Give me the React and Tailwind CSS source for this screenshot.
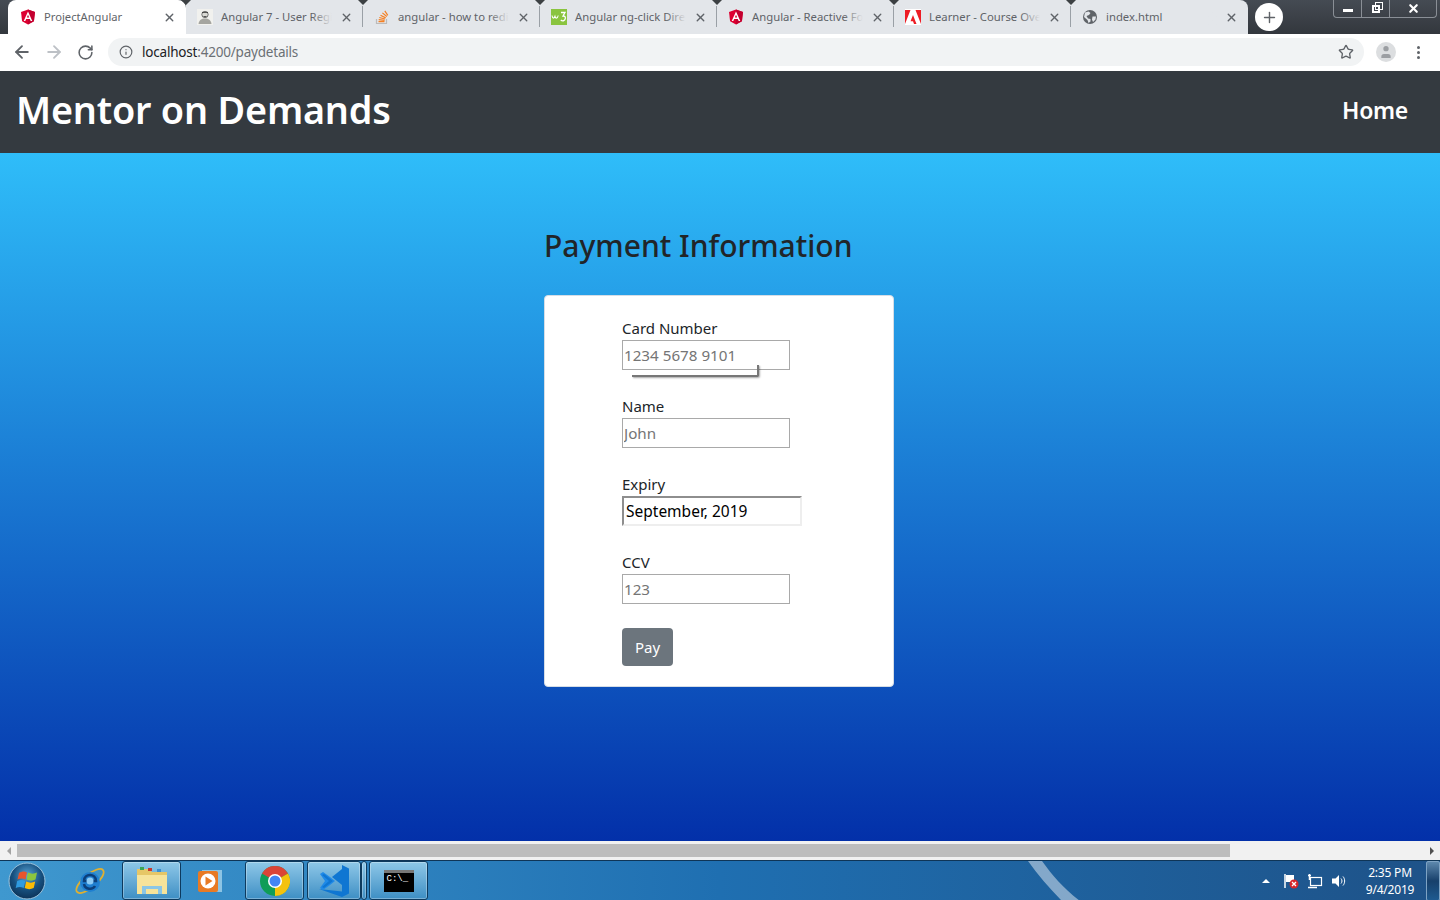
import { X, ArrowLeft, ArrowRight, RotateCw, Info, Star, Plus, User } from 'lucide-react';

const uiFont = 'font-["Noto_Sans",sans-serif]';

function AngularIcon() {
  return (
    <svg viewBox="0 0 16 16" className="w-4 h-4 shrink-0">
      <path d="M8 .5 1 3l1.100 9.200L8 15.500l5.900-3.300L15 3z" fill="#dd0031" />
      <path d="M8 .5V15.500l5.900-3.300L15 3z" fill="#c3002f" />
      <path d="M8 2.600 3.700 12h1.600l.9-2.100h3.600l.9 2.100h1.600zm1.200 6H6.800L8 5.700z" fill="#fff" />
    </svg>
  );
}

function PersonIcon() {
  return (
    <svg viewBox="0 0 16 16" className="w-4 h-4 shrink-0">
      <rect width="16" height="16" fill="#f1f1ee" />
      <circle cx="8" cy="5.500" r="3.200" fill="#d9d9d4" stroke="#555" strokeWidth="0.800" />
      <path d="M1.500 15c.5-4 3-5.500 6.500-5.500s6 1.500 6.500 5.500z" fill="#a5a5a0" />
      <path d="M5 3.500h6M6.500 7.500h3" stroke="#333" strokeWidth="0.800" />
    </svg>
  );
}

function StackIcon() {
  return (
    <svg viewBox="0 0 16 16" className="w-4 h-4 shrink-0" fill="none">
      <path d="M2.500 10v4.500h10V10" stroke="#bcbbbb" strokeWidth="1.200" />
      <path d="M4.500 12.700h6M4.700 10.700l5.900.6M5.300 8.500l5.700 1.500M6.500 6.200l5.200 2.700M8.400 3.900l4.400 3.600M10.800 1.800l3 4.500" stroke="#f48024" strokeWidth="1.200" />
    </svg>
  );
}

function W3Icon() {
  return (
    <svg viewBox="0 0 16 16" className="w-4 h-4 shrink-0" fill="none">
      <rect width="16" height="16" fill="#8ac43f" />
      <path d="M1 6.500c.5 3 2 3.500 3 .8.800 2.700 2.500 2.200 3.200-.8" stroke="#fff" strokeWidth="1.100" />
      <path d="M10 3.500h4l-2 3.500c2 0 2.500 1 2.300 2.500-.3 2.500-3 3-4.500 1.500" stroke="#fff" strokeWidth="1.300" />
    </svg>
  );
}

function AdobeIcon() {
  return (
    <svg viewBox="0 0 16 16" className="w-4 h-4 shrink-0">
      <rect width="16" height="16" fill="#fff" />
      <path d="M0 1h5.500L0 15zM16 1h-5.500L16 15zM8 6l3.500 9H9l-1-2.700H5.500z" fill="#ed1c24" />
    </svg>
  );
}

function GlobeIcon() {
  return (
    <svg viewBox="0 0 16 16" className="w-4 h-4 shrink-0">
      <circle cx="8" cy="8" r="7" fill="#5f6368" />
      <path d="M3 3.500 6.500 2.500l2 1.500-1.500 2-2.500 1 1.500 2.500 2.500.5v2.500l-2 1.500-1-3-3.500-3zM10.500 7.500h3.500l-.5 3-2.500 2.500-1-2.500z" fill="#e3e6ea" />
    </svg>
  );
}

const tabs = [
  { title: 'Angular 7 - User Registration', icon: <PersonIcon /> },
  { title: 'angular - how to redirect', icon: <StackIcon /> },
  { title: 'Angular ng-click Directive', icon: <W3Icon /> },
  { title: 'Angular - Reactive Forms', icon: <AngularIcon /> },
  { title: 'Learner - Course Overview', icon: <AdobeIcon /> },
  { title: 'index.html', icon: <GlobeIcon /> },
];

function Notch() {
  return (
    <div className="absolute right-[-5px] top-0 w-0 h-0 border-l-[5px] border-r-[5px] border-t-[5px] border-l-transparent border-r-transparent border-t-[#3c4043]" />
  );
}

function Tab({ title, icon, last }) {
  return (
    <div className="relative w-[177px] h-[34px] shrink-0 flex items-center pl-[11px] pr-[10px]">
      {icon}
      <div className="ml-[8px] flex-1 overflow-hidden whitespace-nowrap text-[11.300px] leading-[16px] pb-[1px] text-[#5f6368] relative">
        {title}
        <div className="absolute right-0 top-0 bottom-0 w-5 bg-gradient-to-r from-transparent to-[#e3e6ea]" />
      </div>
      <X size={13} strokeWidth={2.500} className="ml-[8px] text-[#5f6368] shrink-0" />
      {!last && <div className="absolute right-0 top-[6px] h-[21px] w-px bg-[#9aa0a6]" />}
      {!last && <Notch />}
    </div>
  );
}

function TabStrip() {
  return (
    <div className="h-[34px] flex bg-gradient-to-b from-[#454b53] to-[#33373d] shrink-0">
      <div className="w-[8px]" />
      <div className="relative w-[178px] h-[34px] bg-white rounded-t-[8px] flex items-center pl-[12px] pr-[10px] shrink-0">
        <AngularIcon />
        <div className="ml-[8px] flex-1 text-[11.200px] leading-[16px] pb-[1px] text-[#5f6368] whitespace-nowrap">ProjectAngular</div>
        <X size={13} strokeWidth={2.500} className="text-[#5f6368]" />
        <Notch />
      </div>
      <div className="flex bg-[#e3e6ea] rounded-tr-[8px]">
        {tabs.map((t, i) => (
          <Tab key={t.title} title={t.title} icon={t.icon} last={i === tabs.length - 1} />
        ))}
      </div>
      <div className="ml-[7px] mt-[3px] w-[28px] h-[28px] rounded-full bg-white flex items-center justify-center shrink-0">
        <Plus size={17} strokeWidth={2} className="text-[#5f6368]" />
      </div>
      <div className="flex-1" />
      <div className="h-[18px] w-[104px] mr-[3px] flex border border-t-0 border-[#8a8f96] rounded-b-[4px] text-white">
        <div className="w-[28px] flex items-center justify-center border-r border-[#8a8f96]">
          <div className="w-[10px] h-[3px] bg-white mt-[3px]" />
        </div>
        <div className="w-[28px] flex items-center justify-center border-r border-[#8a8f96]">
          <div className="relative w-[8px] h-[8px] border-2 border-white mt-[1px]">
            <div className="absolute left-[1px] top-[-5px] w-[8px] h-[8px] border border-white" />
          </div>
        </div>
        <div className="flex-1 flex items-center justify-center">
          <X size={13} strokeWidth={4} />
        </div>
      </div>
    </div>
  );
}

function Toolbar() {
  return (
    <div className="h-[37px] bg-white flex items-center shrink-0 pb-[1px]">
      <ArrowLeft size={20} strokeWidth={2.200} className="ml-[12px] text-[#5f6368]" />
      <ArrowRight size={20} strokeWidth={2.200} className="ml-[12px] text-[#bdc1c6]" />
      <RotateCw size={17} strokeWidth={2.200} className="ml-[13px] text-[#5f6368]" />
      <div className="ml-[14px] h-[28px] w-[1256px] bg-[#f1f3f4] rounded-full flex items-center">
        <Info size={14} strokeWidth={2} className="ml-[11px] text-[#5f6368]" />
        <div className="ml-[9px] text-[13.500px] tracking-[-0.2px] text-[#202124]">
          localhost<span className="text-[#6b7075]">:4200/paydetails</span>
        </div>
        <div className="flex-1" />
        <Star size={16} strokeWidth={2} className="mr-[10px] text-[#5f6368]" />
      </div>
      <div className="ml-[12px] w-[20px] h-[20px] rounded-full bg-[#dcdee0] flex items-center justify-center overflow-hidden">
        <User size={16} strokeWidth={0} fill="#9b9ea2" />
      </div>
      <div className="ml-[21px] flex flex-col gap-[2px]">
        <div className="w-[3px] h-[3px] rounded-full bg-[#5f6368]" />
        <div className="w-[3px] h-[3px] rounded-full bg-[#5f6368]" />
        <div className="w-[3px] h-[3px] rounded-full bg-[#5f6368]" />
      </div>
    </div>
  );
}

function Field({ label, placeholder, children, shadow }) {
  return (
    <div className="mb-[24px]">
      <label className="block h-[24px] leading-[24px] text-[15px] text-[#212529]">{label}</label>
      <div className="relative">
        {children || (
          <input
            type="text"
            placeholder={placeholder}
            className="block w-[168px] h-[30px] border border-[#a9a9a9] bg-white px-[1px] pb-[1px] text-[15.200px] text-[#212529] placeholder:text-[#757575] outline-none"
          />
        )}
        {shadow && (
          <div className="absolute left-[10px] top-[25px] w-[127px] h-[12px] border-r-2 border-b-2 border-[#777] rounded-br-[2px] shadow-[1px_1px_2px_rgba(0,0,0,0.35)] [clip-path:inset(0_-4px_-4px_0)]" />
        )}
      </div>
    </div>
  );
}

function PayForm() {
  return (
    <div className="w-[350px] h-[392px] bg-white rounded-[4px] border border-[#d5dde6] pl-[77px] pt-[20px]">
      <Field label="Card Number" placeholder="1234 5678 9101" shadow />
      <Field label="Name" placeholder="John" />
      <Field label="Expiry">
        <input
          type="text"
          defaultValue="September, 2019"
          className="block w-[180px] h-[30px] border-2 border-t-[#8e8e8e] border-l-[#8e8e8e] border-r-[#eeeeee] border-b-[#eeeeee] bg-white px-[2px] text-[15.500px] text-black outline-none"
        />
      </Field>
      <Field label="CCV" placeholder="123" />
      <button className="w-[51px] h-[38px] bg-[#6c757d] rounded-[4px] text-white text-[15px]">Pay</button>
    </div>
  );
}

function WindowsOrb() {
  return (
    <svg viewBox="0 0 38 38" className="w-[38px] h-[38px]">
      <defs>
        <radialGradient id="orb" cx="50%" cy="35%" r="65%">
          <stop offset="0%" stopColor="#5aa6d8" />
          <stop offset="60%" stopColor="#17507f" />
          <stop offset="100%" stopColor="#0c3358" />
        </radialGradient>
      </defs>
      <circle cx="19" cy="19" r="18" fill="url(#orb)" stroke="#9cc3dc" strokeWidth="1" />
      <path d="M11 11c3-2 6-2 8-.500l-1.500 7c-2.500-1.500-5-1.500-8 0z" fill="#e8552c" />
      <path d="M20 10.500c3 1.500 6 1.500 9 0l-1.500 7c-3 1.500-6 1.500-9 0z" fill="#8cc63f" />
      <path d="M9.200 19c3-1.500 5.500-1.500 8 0L15.700 26c-2.500-1.500-5-1.500-8 0z" fill="#2f9be0" />
      <path d="M18.200 19.500c3 1.500 6 1.500 9 0L25.700 26c-3 1.500-6 1.500-9 0z" fill="#fbbc05" />
    </svg>
  );
}

function IeIcon() {
  return (
    <svg viewBox="0 0 34 34" className="w-[34px] h-[34px]" fill="none">
      <ellipse cx="17" cy="17" rx="17" ry="6.500" transform="rotate(-40 17 17)" stroke="#e0b030" strokeWidth="1.800" />
      <circle cx="17" cy="18" r="10" fill="#1f7fd0" />
      <path d="M11 17h12c0-8-12-8-12 0zm0 3c1 6 9 6 11 2" stroke="#0b3f7a" strokeWidth="2.500" />
      <circle cx="17" cy="17" r="3.500" fill="#8ccbf5" />
    </svg>
  );
}

function FolderIcon() {
  return (
    <svg viewBox="0 0 32 30" className="w-[32px] h-[30px]">
      <path d="M1 3h12l3 3h15v22H1z" fill="#e6c666" />
      <rect x="4" y="1" width="4" height="3" fill="#3aa655" />
      <rect x="12" y="2" width="4" height="3" fill="#c8372d" />
      <rect x="21" y="3" width="4" height="3" fill="#3a8fd0" />
      <path d="M1 9h30v19H1z" fill="#f6e39a" />
      <path d="M6 20h20v8h-4v-5H10v5H6z" fill="#8ac6e6" />
    </svg>
  );
}

function MediaIcon() {
  return (
    <svg viewBox="0 0 28 28" className="w-[28px] h-[28px]">
      <rect x="6" y="3" width="20" height="22" fill="#8cc4e4" />
      <rect x="2" y="4" width="20" height="21" rx="2" fill="#e87a24" />
      <circle cx="12" cy="14" r="7.500" fill="#fff" />
      <path d="M9.500 9.500v9l7-4.500z" fill="#e87a24" />
    </svg>
  );
}

function ChromeIcon() {
  return (
    <svg viewBox="0 0 30 30" className="w-[30px] h-[30px]">
      <circle cx="15" cy="15" r="15" fill="#0f9d58" />
      <path d="M15 15 2 7.500A15 15 0 0 1 28 7.500z" fill="#db4437" />
      <path d="M15 15 28 7.500A15 15 0 0 1 15 30z" fill="#f4c20d" />
      <circle cx="15" cy="15" r="7" fill="#fff" />
      <circle cx="15" cy="15" r="5.500" fill="#4285f4" />
    </svg>
  );
}

function VsCodeIcon() {
  return (
    <svg viewBox="0 0 34 34" className="w-[34px] h-[34px]">
      <path d="M25 1l7 3.500v25L25 33 2 25l23 2.500V21l-10-8 10-8z" fill="#0f76d2" />
      <path d="M3 10l3-2 7 5 5 4-5 4-7 5-3-2 5-7z" fill="#1f8ae8" />
      <path d="M5 11l7 6-7 6 2 1 9-7-9-7z" fill="#0f76d2" />
    </svg>
  );
}

function TaskButton({ width, children }) {
  return (
    <div
      className="h-[39px] rounded-[3px] border border-[#0d3a5e] shadow-[inset_0_0_0_1px_rgba(255,255,255,0.3)] bg-gradient-to-b from-[#8ec8e8] to-[#3d8fc4] flex items-center justify-center shrink-0"
      style={{ width }}
    >
      {children}
    </div>
  );
}

function Taskbar() {
  return (
    <div className="relative h-[40px] shrink-0 border-t border-[#0f3557] bg-linear-to-r/srgb from-[#3f98cf] via-[#1f6fb1] to-[#1e5288] flex items-center overflow-hidden text-white">
      <svg className="absolute left-[1020px] top-0 w-[70px] h-[40px]" viewBox="0 0 70 40">
        <path d="M8 0h14c10 14 22 28 38 40H42C30 28 18 14 8 0z" fill="#ffffff" opacity="0.45" />
      </svg>
      <div className="ml-[8px] shrink-0"><WindowsOrb /></div>
      <div className="ml-[27px] shrink-0"><IeIcon /></div>
      <div className="ml-[15px] shrink-0"><TaskButton width={59}><FolderIcon /></TaskButton></div>
      <div className="ml-[15px] shrink-0"><MediaIcon /></div>
      <div className="ml-[21px] shrink-0"><TaskButton width={59}><ChromeIcon /></TaskButton></div>
      <div className="ml-[3px] shrink-0"><TaskButton width={54}><VsCodeIcon /></TaskButton></div>
      <div className="shrink-0"><TaskButton width={6} /></div>
      <div className="ml-[2px] shrink-0">
        <TaskButton width={59}>
          <div className="w-[30px] h-[22px] bg-black border-t-[3px] border-[#777] text-[9px] leading-[12px] font-['Liberation_Mono',monospace] pl-[3px] whitespace-nowrap">C:\_</div>
        </TaskButton>
      </div>
      <div className="flex-1" />
      <div className="w-0 h-0 border-l-[4px] border-r-[4px] border-b-[4px] border-l-transparent border-r-transparent border-b-white mr-[13px]" />
      <svg viewBox="0 0 16 16" className="w-[16px] h-[16px] mr-[8px]">
        <path d="M2 1v14" stroke="#fff" strokeWidth="1.500" />
        <path d="M3 2h8v7H3z" fill="#fff" />
        <circle cx="11" cy="11" r="4.500" fill="#d6262b" />
        <path d="M9 9l4 4m0-4-4 4" stroke="#fff" strokeWidth="1.300" />
      </svg>
      <svg viewBox="0 0 16 16" className="w-[16px] h-[16px] mr-[8px]" fill="none" stroke="#fff">
        <rect x="3.500" y="4.500" width="11" height="8" strokeWidth="1.200" />
        <path d="M1 14.500h9M2.500 1v6M1 2.500h3" strokeWidth="1.500" />
      </svg>
      <svg viewBox="0 0 16 16" className="w-[16px] h-[16px] mr-[12px]" fill="none">
        <path d="M1 5.500h3.500L8 2v12l-3.500-3.500H1z" fill="#fff" />
        <path d="M10 5.500c1.300 1.500 1.300 3.500 0 5M12 3.500c2.200 2.500 2.200 6.500 0 9" stroke="#fff" strokeWidth="1" />
      </svg>
      <div className="w-[62px] text-center text-[12px] leading-[17px] tracking-[-0.2px] mr-[5px]">
        <div>2:35 PM</div>
        <div>9/4/2019</div>
      </div>
      <div className="w-[14px] h-[40px] border border-[#7ea3c4] rounded-[2px] bg-gradient-to-b from-[#5d88ad] via-[#17406b] to-[#1e5a90] shrink-0" />
    </div>
  );
}

function Scrollbar() {
  return (
    <div className="h-[19px] shrink-0 bg-[#f1f1f1] flex items-center">
      <div className="w-[17px] flex justify-center">
        <div className="w-0 h-0 border-t-[4px] border-b-[4px] border-r-[4px] border-t-transparent border-b-transparent border-r-[#a3a3a3]" />
      </div>
      <div className="w-[1213px] h-[13px] bg-[#bdbdbd]" />
      <div className="flex-1" />
      <div className="w-[17px] flex justify-center">
        <div className="w-0 h-0 border-t-[4px] border-b-[4px] border-l-[4px] border-t-transparent border-b-transparent border-l-[#505050]" />
      </div>
    </div>
  );
}

export default function App() {
  return (
    <div className={`h-screen flex flex-col overflow-hidden ${uiFont}`}>
      <TabStrip />
      <Toolbar />
      <nav className="h-[82px] shrink-0 bg-[#343a40] flex items-center justify-between pl-[16px] pr-[32px] pb-[3px] text-white">
        <div className="text-[37.800px] font-semibold tracking-[-0.2px]">Mentor on Demands</div>
        <div className="text-[23px] font-semibold tracking-[-0.3px]">Home</div>
      </nav>
      <main className="flex-1 bg-linear-to-b/srgb from-[#2fbdf9] to-[#0330a9] flex flex-col items-center pr-[2px]">
        <h1 className="mt-[72px] w-[350px] h-[70px] text-[30px] leading-[42px] font-medium text-[#212529]">Payment Information</h1>
        <PayForm />
      </main>
      <Scrollbar />
      <Taskbar />
    </div>
  );
}
